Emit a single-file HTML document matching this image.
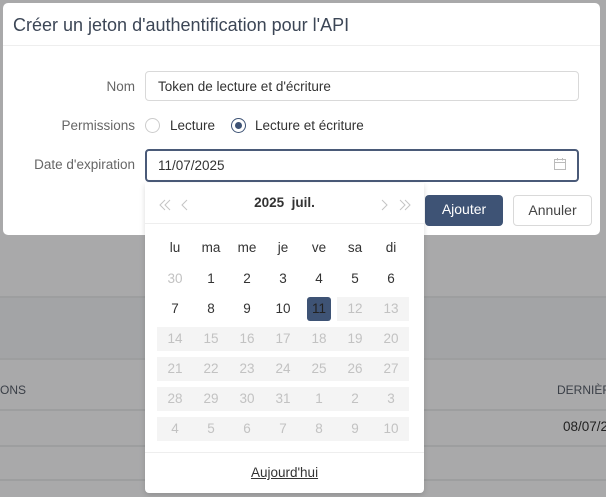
<!DOCTYPE html>
<html><head><meta charset="utf-8"><style>
*{box-sizing:border-box;margin:0;padding:0}
body{width:606px;height:497px;overflow:hidden;background:#a9a9aa;font-family:"Liberation Sans",sans-serif;position:relative;color:#333}
.abs{position:absolute}
.hl{position:absolute;left:0;width:606px;height:2px;background:#9d9e9f}
.modal{left:3px;top:3px;width:597px;height:232px;background:#fff;border-radius:5px}
.title{left:13px;top:15px;font-size:18px;color:#3c4656}
.lbl{font-size:13.5px;color:#666;text-align:right;width:135px;left:0}
.inp{left:145px;width:434px;height:30px;border:1px solid #d9d9d9;border-radius:4px;background:#fff;font-size:13.5px;padding:7px 12px;color:#333}
.radio{width:15px;height:15px;border-radius:50%;border:1px solid #ccc;background:#fff}
.btn{height:31px;border-radius:4px;font-size:14px;text-align:center;line-height:29px}
.pop{left:145px;top:183px;width:279px;height:310px;background:#fff;border-radius:0 0 4px 4px;box-shadow:0 2px 6px rgba(0,0,0,.15)}
.c{position:absolute;width:36px;text-align:center;font-size:13.5px;line-height:24px}
.g{color:#c2c2c2}
.band{position:absolute;background:#f4f4f4;height:24px}
</style></head><body>
<div class="hl" style="top:296px"></div>
<div class="abs" style="left:0;top:298px;width:606px;height:60px;background:#a3a4a6"></div>
<div class="hl" style="top:358px"></div>
<div class="hl" style="top:409px"></div>
<div class="hl" style="top:445px"></div>
<div class="hl" style="top:479px"></div>
<div class="abs" style="left:0;top:383px;font-size:12px;color:#3a3f47">ONS</div>
<div class="abs" style="left:557px;top:383px;font-size:12px;color:#3a3f47;white-space:nowrap">DERNIÈRE</div>
<div class="abs" style="left:563px;top:419px;font-size:13.5px;color:#222;white-space:nowrap">08/07/2025</div>

<div class="abs modal"></div>
<div class="abs" style="left:3px;top:45px;width:597px;height:1px;background:#eee"></div>
<div class="abs title">Créer un jeton d'authentification pour l'API</div>
<div class="abs lbl" style="top:79px">Nom</div>
<div class="abs inp" style="top:71px">Token de lecture et d'écriture</div>
<div class="abs lbl" style="top:118px">Permissions</div>
<div class="abs radio" style="left:145px;top:118px"></div>
<div class="abs" style="left:170px;top:118px;font-size:13.5px">Lecture</div>
<div class="abs radio" style="left:231px;top:118px;border-color:#3e5375"><div style="width:7px;height:7px;border-radius:50%;background:#3e5375;margin:3px"></div></div>
<div class="abs" style="left:255px;top:118px;font-size:13.5px">Lecture et écriture</div>
<div class="abs lbl" style="top:157px">Date d'expiration</div>
<div class="abs inp" style="top:149px;height:33px;border:2px solid #4a5a78;padding:7px 11px">11/07/2025</div>
<svg class="abs" style="left:553px;top:157px" width="14" height="14" viewBox="0 0 14 14" fill="none" stroke="#bbb" stroke-width="1"><rect x="1.5" y="2.5" width="11" height="10"/><line x1="1.5" y1="5.5" x2="12.5" y2="5.5"/><line x1="4.5" y1="1" x2="4.5" y2="3.5"/><line x1="9.5" y1="1" x2="9.5" y2="3.5"/></svg>
<div class="abs btn" style="left:425px;top:195px;width:78px;background:#3e5375;color:#fff">Ajouter</div>
<div class="abs btn" style="left:513px;top:195px;width:79px;border:1px solid #d9d9d9;color:#444;background:#fff">Annuler</div>

<div class="abs pop">
<div class="abs" style="left:0;width:279px;top:12px;text-align:center;font-size:13.5px;font-weight:600;color:#333">2025&nbsp; juil.</div>
<div class="abs" style="left:0;top:40px;width:279px;height:1px;background:#eee"></div>
<div class="abs" style="left:0;top:269px;width:279px;height:1px;background:#eee"></div>
<div class="abs" style="left:0;width:279px;top:282px;text-align:center;font-size:13.5px;text-decoration:underline;color:#333">Aujourd'hui</div>
<div class="band" style="left:192px;top:114px;width:72px"></div>
<div class="band" style="left:12px;top:144px;width:252px"></div>
<div class="band" style="left:12px;top:174px;width:252px"></div>
<div class="band" style="left:12px;top:204px;width:252px"></div>
<div class="band" style="left:12px;top:234px;width:252px"></div>
<div class="abs" style="left:162px;top:114px;width:24px;height:24px;background:#3e5375;border-radius:3px"></div>
<div id="cal"></div>
</div>
<svg class="abs" style="left:155px;top:197px" width="260" height="16" fill="none" stroke="#c4c4c4" stroke-width="1">
<polyline points="10,3 5,8 10,13"/><polyline points="15,3 10,8 15,13"/>
<polyline points="32,3 27,8 32,13"/>
<polyline points="227,3 232,8 227,13"/>
<polyline points="245,3 250,8 245,13"/><polyline points="250,3 255,8 250,13"/>
</svg>
<script>
var cal=document.getElementById('cal'),h='';
var wd=['lu','ma','me','je','ve','sa','di'];
wd.forEach(function(d,i){h+='<div class="c" style="left:'+(12+i*36)+'px;top:53px">'+d+'</div>'});
var days=[30];for(var i=1;i<=31;i++)days.push(i);for(i=1;i<=10;i++)days.push(i);
days.forEach(function(d,k){var r=Math.floor(k/7),c=k%7;var g=(k==0||k>11);var st=k==11?'color:#222':'';
h+='<div class="c'+(g?' g':'')+'" style="left:'+(12+c*36)+'px;top:'+(84+r*30)+'px;'+st+'">'+d+'</div>'});
cal.innerHTML=h;
</script>
</body></html>
